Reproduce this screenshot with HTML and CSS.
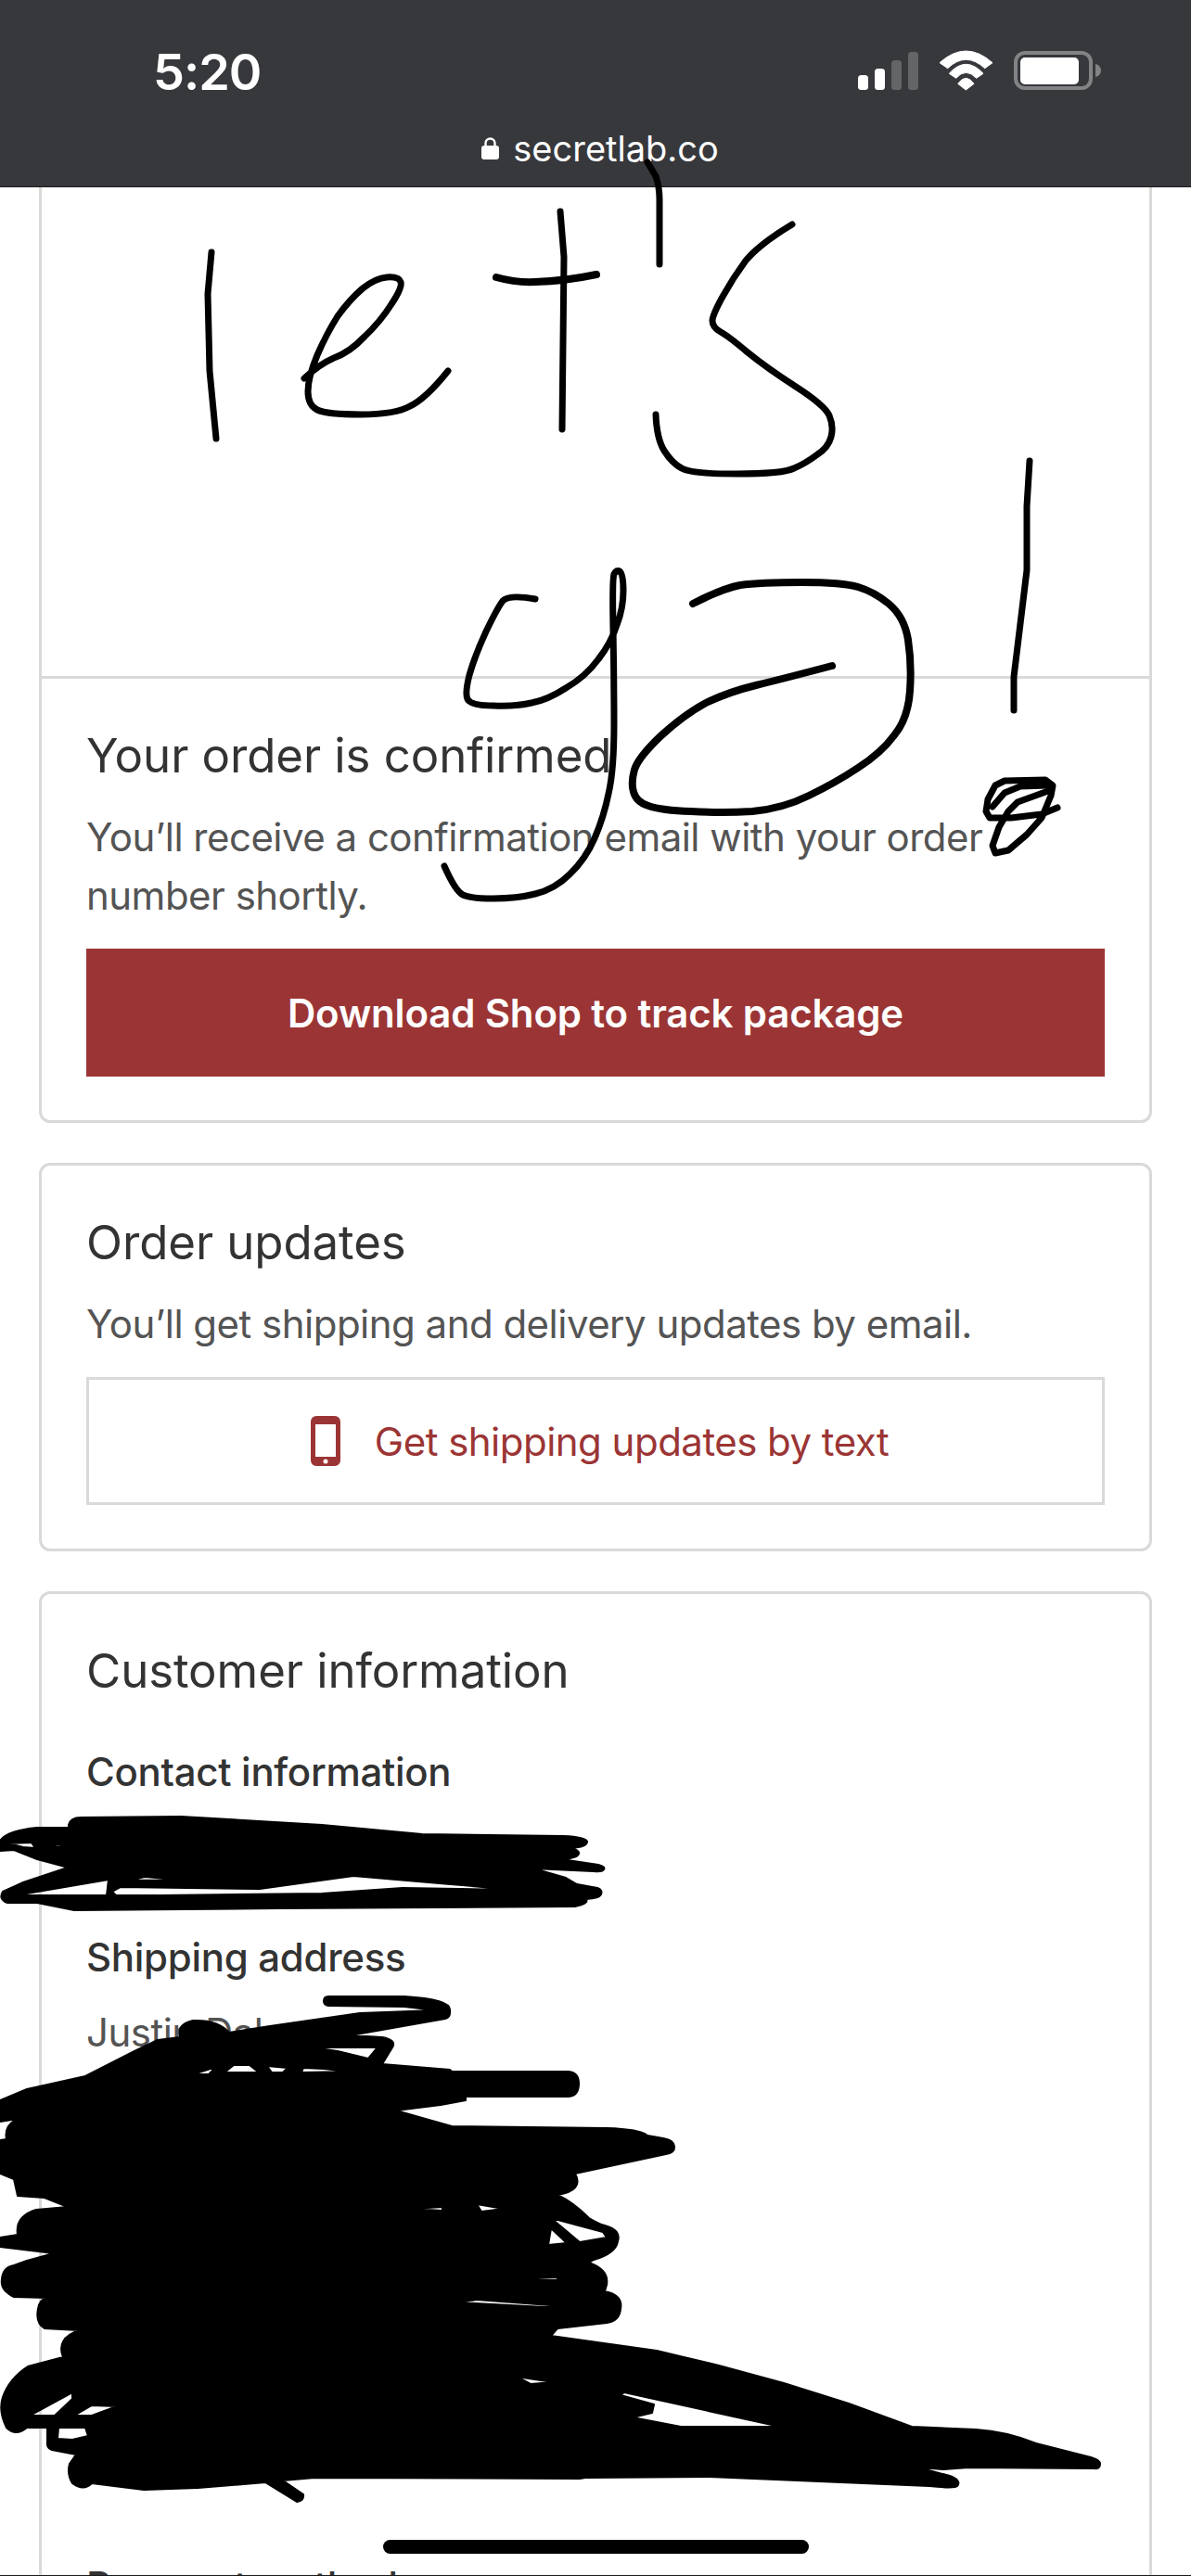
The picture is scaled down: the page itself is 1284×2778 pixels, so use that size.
FILE: index.html
```html
<!DOCTYPE html>
<html lang="en">
<head>
  <meta charset="UTF-8">
  <meta name="viewport" content="width=device-width, initial-scale=1.0">
  <title>secretlab.co - Order confirmed</title>
  <link rel="stylesheet" href="styles.css">
</head>
<body>
  <header class="topbar">
    <div class="status-row">
      <span class="time">5:20</span>
      <div class="status-icons">
        <svg class="icon-signal" viewBox="0 0 65 41">
          <rect x="0" y="25" width="11" height="16" rx="3.5" fill="#fff"/>
          <rect x="18" y="18" width="11" height="23" rx="3.5" fill="#fff"/>
          <rect x="36" y="9" width="11" height="32" rx="3.5" fill="#646567"/>
          <rect x="54" y="0" width="11" height="41" rx="3.5" fill="#646567"/>
        </svg>
        <svg class="icon-wifi" viewBox="0 0 60 44">
          <path d="M1 13.7Q29.3 -11.7 58 13.7L49.7 19.7Q29.3 .9 9.7 19.7Z"/>
          <path d="M11.3 25.3Q29.3 5.3 48 25.3L40.7 30.3Q29.3 18.3 18.7 30.3Z"/>
          <path d="M20.7 36.3Q29.3 24.3 38 36.3L29.3 43Z"/>
        </svg>
        <svg class="icon-battery" viewBox="0 0 94 42">
          <rect x="2" y="2" width="81" height="38" rx="10" fill="none" stroke="#828385" stroke-width="4"/>
          <rect x="7" y="7" width="63" height="29" rx="5" fill="#fff"/>
          <path d="M88 14C92 15 94 18 94 21S92 27 88 28Z" fill="#828385"/>
        </svg>
      </div>
    </div>
    <div class="url-row">
      <svg class="icon-lock" viewBox="0 0 19 24">
        <path d="M4.5 10V6.5a5 5 0 0 1 10 0V10" fill="none" stroke="#fff" stroke-width="2.4"/>
        <rect x="0" y="9" width="19" height="15" rx="3" fill="#fff"/>
      </svg>
      <span>secretlab.co</span>
    </div>
  </header>

  <main class="cards">
    <section class="card card-first">
      <div class="map"></div>
      <div class="card-body">
        <h2>Your order is confirmed</h2>
        <p class="copy">You’ll receive a confirmation email with your order number shortly.</p>
        <a class="btn btn-solid" href="#">Download Shop to track package</a>
      </div>
    </section>

    <section class="card">
      <div class="card-body">
        <h2>Order updates</h2>
        <p class="copy">You’ll get shipping and delivery updates by email.</p>
        <a class="btn btn-outline" href="#">
          <svg class="icon-phone" viewBox="0 0 32 54">
            <path fill-rule="evenodd" d="M6 0H26A6 6 0 0 1 32 6V48A6 6 0 0 1 26 54H6A6 6 0 0 1 0 48V6A6 6 0 0 1 6 0ZM5 9V44H27V9ZM16 46.5A2.5 2.5 0 1 0 16 51.5A2.5 2.5 0 1 0 16 46.5Z"/>
          </svg>
          Get shipping updates by text
        </a>
      </div>
    </section>

    <section class="card">
      <div class="card-body">
        <h2>Customer information</h2>
        <h3 class="info-title">Contact information</h3>
        <p class="copy info-value info-contact"></p>
        <h3 class="info-title">Shipping address</h3>
        <p class="copy info-value">Justin Dal</p>
        <div class="info-hidden"></div>
        <h3 class="info-title">Payment method</h3>
      </div>
    </section>
  </main>

  <!-- markup drawn on top of the screenshot -->
  <svg class="ink" viewBox="0 0 1284 2778">
    <g class="ink-lines">
      <path d="M228 272L224 317L226 400L233 473"/>
      <path d="M328 408Q344 393 360 386Q377 380 393 363Q410 347 422 328Q434 310 432 304Q430 298 417 299Q405 300 391 311Q377 323 364 341Q352 360 342 383Q332 407 332 422Q332 437 342 442Q352 447 389 447Q426 447 442 438Q459 430 483 400"/>
      <path d="M604 228L608 277L606 463"/>
      <path class="ink-thick" d="M535 299Q556 305 577 304Q610 303 643 296"/>
      <path d="M698 175L707 190Q711 202 711 215L711 285"/>
      <path d="M854 242Q819 263 804 281Q790 300 779 320Q768 340 768 346Q768 353 777 358Q786 363 806 380Q827 397 858 417Q889 437 894 448Q899 460 896 471Q893 483 880 491Q868 500 856 505Q844 511 794 511Q745 511 735 505Q725 500 716 486Q708 473 707 447"/>
      <path d="M1110 497L1107 546L1107 615L1093 730L1093 766"/>
      <path d="M577 646Q549 641 542 648Q536 656 524 681Q512 707 506 728Q501 748 504 754Q508 761 532 761Q557 762 573 758Q590 755 610 742Q631 730 645 711Q659 693 665 674Q672 656 672 637Q672 619 668 616Q665 614 662 619Q660 624 661 677Q662 730 662 780Q662 831 656 856Q651 881 641 904Q631 927 614 943Q598 959 577 964Q557 969 532 969Q508 969 499 965Q491 961 479 934"/>
      <path class="ink-thick" d="M747 651Q778 635 798 631Q819 628 864 628Q909 628 925 633Q942 638 958 651Q975 665 979 690Q983 716 981 745Q979 775 964 793Q950 812 925 828Q901 844 872 858Q844 872 811 875Q778 877 745 875Q713 874 699 869Q686 865 683 854Q680 844 684 830Q688 817 712 794Q737 771 761 758Q786 746 815 739Q844 732 897 718"/>
      <path d="M1140 871L1123 878L1090 882L1067 882L1063 875L1065 862L1073 847L1083 842L1127 841L1135 847L1133 858L1123 882L1107 900L1087 917L1073 920L1070 912L1077 892L1087 875L1097 865L1130 853"/>
      <path d="M1070 870L1083 855L1100 848L1130 847"/>
    </g>
    <path class="ink-blob" fill-rule="evenodd" d="M74 1968Q76 1960 87 1960L195 1959L347 1968L455 1978L607 1980Q632 1981 633 1986Q633 1992 615 1993Q625 1995 624 1999Q623 2004 605 2005L645 2011Q653 2013 651 2016Q650 2019 640 2018L575 2015L610 2025L622 2032L644 2036Q650 2038 648 2043Q646 2047 632 2048Q635 2053 620 2056L300 2058L80 2060L40 2052L8 2052Q-2 2048 3 2040L25 2030L70 2015L100 2014L70 2013L40 2005L15 1995L0 1996L0 1985Q8 1974 40 1971L74 1971Z
      M9 1988L34 1987L38 1993L25 1992Z
      M50 1987L85 1992L60 1991Z
      M130 2035L280 2037L381 2023L555 2038L434 2036L347 2042L173 2044L125 2044L121 2040Z
      M17 2044L117 2027L115 2044Z
      M139 2028L156 2024L191 2027Z"/>
    <path class="ink-blob" fill-rule="evenodd" d="M349 2158Q349 2153 354 2153L436 2153Q485 2156 485 2167Q486 2176 480 2177L378 2195L412 2197Q428 2200 423 2208L412 2226L485 2232L487 2234L613 2234Q624 2235 624 2247Q624 2260 613 2261L502 2261L502 2265L475 2270L427 2276L487 2293L654 2295Q690 2296 698 2303L715 2306Q727 2308 727 2316Q727 2322 718 2323L620 2344Q630 2362 601 2367Q618 2375 635 2392Q645 2398 652 2400Q670 2405 666 2417Q664 2430 640 2437L635 2440Q657 2448 654 2464L652 2471Q672 2475 669 2490Q668 2503 654 2505L601 2511L594 2519L708 2535L775 2551L845 2570L915 2592L983 2617L1052 2620Q1085 2622 1117 2635L1176 2650Q1186 2653 1186 2657Q1186 2663 1180 2662L1044 2661L1017 2663L990 2661L1024 2670Q1037 2675 1032 2681Q1030 2684 1002 2681L765 2671L631 2672L625 2673L339 2672L305 2675L327 2690Q328 2697 320 2698L286 2677L213 2683L155 2685L99 2678Q90 2687 78 2678Q72 2668 75 2657L82 2647L56 2642Q50 2640 51 2633L51 2618L29 2618Q17 2628 7 2618Q-2 2600 3 2585Q10 2565 30 2552L68 2542Q60 2522 85 2513L48 2511Q38 2505 41 2490Q42 2480 51 2478L15 2477Q0 2470 2 2458Q3 2445 15 2443L29 2438L58 2430L0 2423L0 2413L19 2410Q16 2390 39 2383L73 2380L48 2370L19 2368L15 2350L0 2344L0 2308L7 2307Q4 2292 19 2285L0 2288L0 2265L29 2253L92 2239L145 2212L170 2200L194 2197Q190 2183 208 2179Q235 2178 247 2192L291 2185L388 2171L470 2168L436 2164L354 2163Q349 2162 349 2158Z
      M208 2237L233 2229L225 2237Z
      M242 2235L252 2227L269 2227L279 2235Z
      M293 2235L288 2228L310 2230L305 2235Z
      M325 2235L327 2230L349 2231L376 2234Z
      M337 2208L407 2208L397 2220L364 2212Z
      M594 2392L650 2407L654 2413L625 2418Z
      M594 2403L611 2419L591 2421Z
      M514 2377L543 2382L519 2385Z
      M444 2382L477 2380L477 2384Z
      M494 2483L514 2480L606 2487L587 2488Z
      M557 2458L601 2456L601 2459Z
      M557 2563L596 2569L572 2571Z
      M32 2605L78 2580L78 2587L59 2605Z
      M80 2605L99 2594L126 2595L99 2605Z
      M63 2618L92 2618L95 2627L78 2631L62 2630Z
      M673 2580L841 2617L734 2617L682 2607L703 2602L705 2593L669 2583Z"/>
  </svg>

  <div class="home-bar"></div>
  <div class="bottom-line"></div>
</body>
</html>
```

FILE: styles.css
```css
html, body {
  margin: 0;
  padding: 0;
}

body {
  position: relative;
  width: 1284px;
  height: 2778px;
  overflow: hidden;
  background: #ffffff;
  font-family: Inter, 'Noto Sans', sans-serif;
  color: #333333;
}

.topbar {
  height: 201px;
  background: #37383c;
  border-bottom: 1px solid #1c1c1e;
  color: #ffffff;
}

.status-row {
  display: flex;
  justify-content: space-between;
  align-items: center;
  height: 52px;
  padding: 50px 97px 0 165px;
}

.time {
  padding-top: 4px;
  font-size: 54px;
  font-weight: 600;
  line-height: 52px;
  letter-spacing: -1px;
}

.status-icons {
  display: flex;
  align-items: center;
  gap: 22px;
}

.icon-signal {
  width: 65px;
  height: 41px;
}

.icon-wifi {
  width: 60px;
  height: 44px;
  fill: #ffffff;
  stroke: #ffffff;
  stroke-width: 1;
  stroke-linejoin: round;
  margin-right: -1px;
}

.icon-battery {
  width: 94px;
  height: 42px;
}

.url-row {
  display: flex;
  justify-content: center;
  align-items: center;
  gap: 15px;
  margin: 33px 0 0 10px;
  font-size: 38px;
  line-height: 50px;
}

.icon-lock {
  width: 19px;
  height: 24px;
}

.cards {
  display: flex;
  flex-direction: column;
  gap: 43px;
  margin: 0 42px;
}

.card {
  border: 3px solid #d9d9d9;
  border-radius: 12px;
}

.card-first {
  border-top: none;
  border-top-left-radius: 0;
  border-top-right-radius: 0;
}

.map {
  height: 527px;
  border-bottom: 3px solid #d9d9d9;
}

.card-body {
  padding: 51px 48px 47px;
}

h2 {
  margin: 0;
  font-size: 51px;
  font-weight: 400;
  line-height: 64px;
  letter-spacing: -0.1px;
}

.copy {
  margin: 24px 0 0;
  font-size: 42px;
  line-height: 63px;
  letter-spacing: -0.52px;
  color: #545454;
}

.btn {
  display: flex;
  justify-content: center;
  align-items: center;
  box-sizing: border-box;
  height: 138px;
  margin-top: 26px;
  font-size: 42px;
  text-decoration: none;
}

.btn-solid {
  background: #9b3535;
  color: #ffffff;
  font-weight: 600;
  letter-spacing: -0.15px;
}

.btn-outline {
  gap: 37px;
  padding-left: 9px;
  border: 3px solid #d9d9d9;
  color: #9b3535;
  letter-spacing: -0.52px;
}

.icon-phone {
  width: 32px;
  height: 54px;
  fill: #9b3535;
}

.info-title {
  margin: 45px 0 0;
  font-size: 42px;
  font-weight: 500;
  line-height: 63px;
  letter-spacing: -0.3px;
}

.info-value {
  margin-top: 18px;
}

.info-contact {
  height: 63px;
  margin-bottom: -45px;
  padding-bottom: 56px;
}

.info-hidden {
  height: 489px;
}

.ink {
  position: absolute;
  top: 0;
  left: 0;
  width: 1284px;
  height: 2778px;
}

.ink-lines {
  fill: none;
  stroke: #000000;
  stroke-width: 7;
  stroke-linecap: round;
  stroke-linejoin: round;
}

.ink-thick {
  stroke-width: 8;
}

.ink-blob {
  fill: #000000;
  stroke: #000000;
  stroke-width: 2;
  stroke-linejoin: round;
}

.home-bar {
  position: absolute;
  left: 413px;
  top: 2739px;
  width: 459px;
  height: 15px;
  border-radius: 8px;
  background: #000000;
}

.bottom-line {
  position: absolute;
  left: 0;
  bottom: 0;
  width: 100%;
  height: 1px;
  background: #1c1c1e;
}
```
